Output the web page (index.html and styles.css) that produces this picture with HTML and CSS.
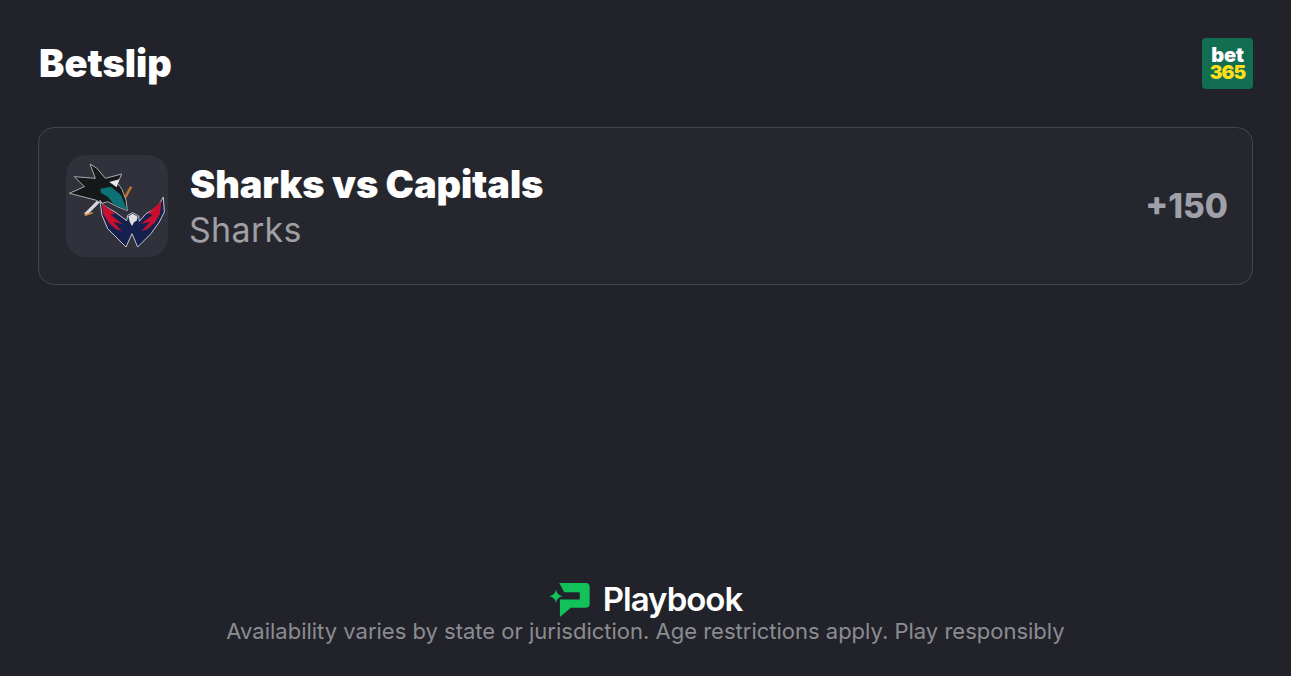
FILE: index.html
```html
<!DOCTYPE html>
<html lang="en">
<head>
<meta charset="utf-8">
<title>Betslip</title>
<link rel="stylesheet" href="styles.css">
</head>
<body>
<main class="page">
  <header class="header">
    <h1 class="title">Betslip</h1>
    <div class="book"><span class="book-a">bet</span><span class="book-b">365</span></div>
  </header>
  <section class="card">
    <div class="thumb">
      <svg class="thumb-art" viewBox="30 30 306 306" aria-hidden="true">
        <g transform="translate(30 45)">
          <path d="M195 80L174 118" stroke="#7a5a3a" stroke-width="9"/>
          <path d="M196 80L175 117" stroke="#c9772b" stroke-width="5"/>
          <path d="M100 122L58 164" stroke="#d8d8da" stroke-width="10"/>
          <path d="M56 166L80 158" stroke="#d98a3a" stroke-width="5"/>
          <path d="M72 12L92 24L118 55L167 42L155 70L168 88L180 120L184 152L150 138L125 125L108 130L88 120L10 100L55 80L25 50L88 55Z" fill="#17181a" stroke="#a9abb0" stroke-width="3" stroke-linejoin="round"/>
          <path d="M130 66L160 58L152 82Z" fill="#e8e8ea"/>
          <path d="M103 86L135 80L165 105L183 150L145 135L125 110L104 98Z" fill="#0e7177"/>
        </g>
        <g transform="translate(120 141)">
          <path d="M12 25L22 40L60 62L92 86L95 70L110 62L128 72L130 88L150 65L185 45L202 15L205 60L190 90L165 125L140 150L125 165L108 125L90 165L60 135L35 110L18 70Z" fill="#16204f" stroke="#c4c6cc" stroke-width="3" stroke-linejoin="round"/>
          <path d="M18 36L58 64L44 69L80 96L52 90L78 118L60 112L38 92L22 66Z" fill="#c8102e"/>
          <path d="M196 28L156 64L170 69L134 96L162 90L136 118L154 112L176 92L192 66Z" fill="#c8102e"/>
          <path d="M97 73L110 65L125 74L122 86L114 91L108 102L101 89Z" fill="#e0e0e3"/>
        </g>
      </svg>
    </div>
    <div class="info">
      <div class="match">Sharks vs Capitals</div>
      <div class="pick">Sharks</div>
    </div>
    <div class="odds">+150</div>
  </section>
  <footer class="footer">
    <div class="brand">
      <svg class="brand-mark" viewBox="30 25 125 103" aria-hidden="true">
        <path d="M60 25H140Q152 25 152 37V88Q152 100 140 100H95L62 128V75H122V53H75Z" fill="#12c15a"/>
        <path d="M50 45Q53 62 70 65Q53 68 50 85Q47 68 30 65Q47 62 50 45Z" fill="#12c15a"/>
      </svg>
      <span class="brand-name">Playbook</span>
    </div>
    <p class="legal">Availability varies by state or jurisdiction. Age restrictions apply. Play responsibly</p>
  </footer>
</main>
</body>
</html>
```
FILE: styles.css
```css
* { box-sizing: border-box; }
html, body { margin: 0; height: 100%; }
body { background: #22232a; color: #fff; font-family: Inter, "Liberation Sans", sans-serif; overflow: hidden; }
.page { height: 676px; padding: 38px 38px 31px; display: flex; flex-direction: column; }
.header { display: flex; justify-content: space-between; align-items: center; height: 51px; margin-bottom: 38px; }
.title { margin: 0 0 2px 1px; font-size: 38px; line-height: 48px; font-weight: 900; }
.book { width: 51px; height: 51px; border-radius: 4px; background: #126e51; display: flex; flex-direction: column; align-items: center; justify-content: center; font-size: 20px; line-height: 17px; font-weight: 900; letter-spacing: -0.2px; }
.book-b { color: #ffdf1b; font-size: 19px; letter-spacing: -0.9px; }
.card { height: 158px; border: 1px solid #45464d; border-radius: 16px; background: #26272e; padding: 27px 24px 27px 27px; display: flex; align-items: center; }
.thumb { width: 102px; height: 102px; border-radius: 20px; background: #30313a; flex: none; margin-right: 22px; }
.thumb-art { display: block; width: 102px; height: 102px; }
.info { flex: 1; }
.match { font-size: 38px; line-height: 48px; font-weight: 900; letter-spacing: -0.1px; }
.pick { font-size: 34px; line-height: 44px; color: #9f9fa4; letter-spacing: 0.3px; margin-left: -1px; }
.odds { font-size: 33.5px; font-weight: 800; color: #a0a0a8; margin-bottom: 1px; }
.footer { margin-top: auto; display: flex; flex-direction: column; align-items: center; }
.brand { display: flex; align-items: center; gap: 12px; height: 34px; }
.brand-mark { width: 42px; height: 34px; display: block; }
.brand-name { font-size: 33px; line-height: 34px; font-weight: 600; letter-spacing: -1px; margin-bottom: 2px; }
.legal { margin: 0; font-size: 22px; line-height: 28px; color: #8b8c91; }
```
